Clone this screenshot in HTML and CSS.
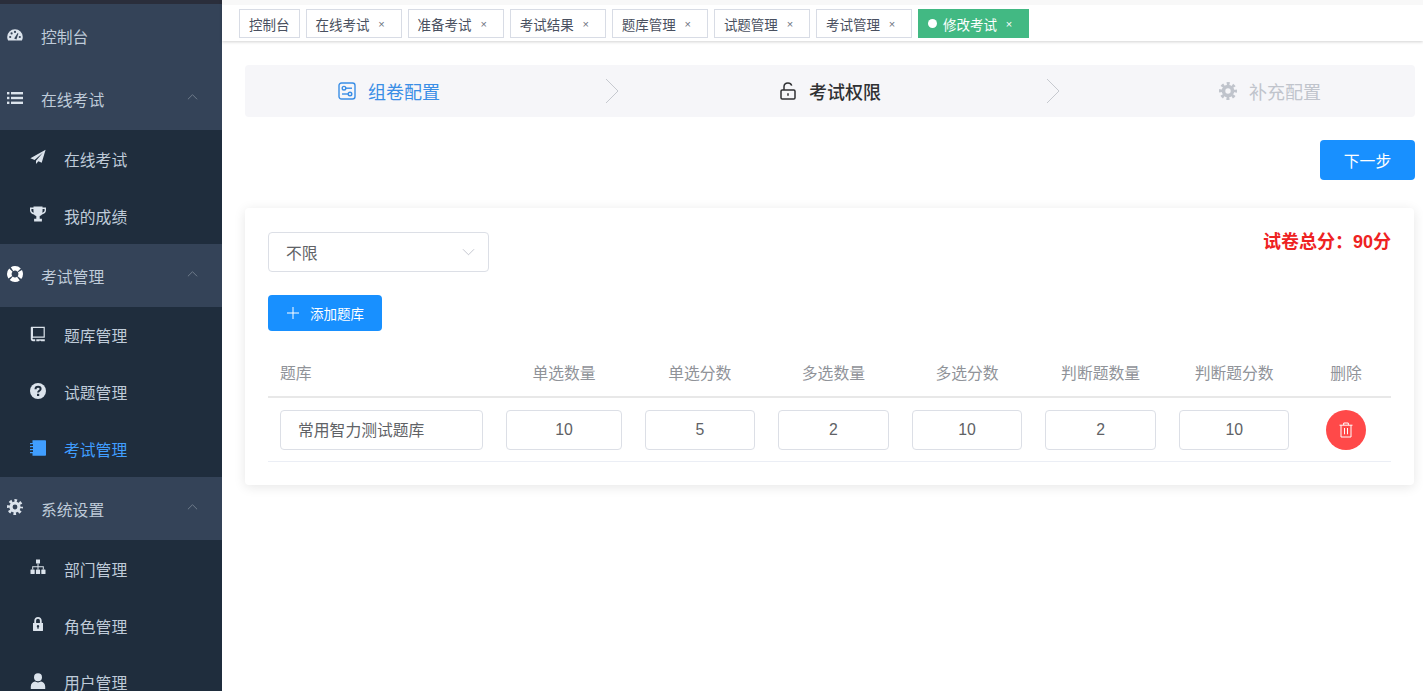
FILE: index.html
```html
<!DOCTYPE html>
<html lang="zh-CN">
<head>
    <meta charset="UTF-8">
    <meta name="viewport" content="width=device-width, initial-scale=1.0">
    <title>修改考试</title>
    <link rel="stylesheet" href="styles.css">
</head>
<body>
<aside class="sidebar">
    <div class="sidebar-top"></div>

    <a class="menu-head">
        <svg class="menu-icon" viewBox="0 0 16 16"><path d="M8 2.2A7.8 7.8 0 0 0 .2 10c0 1.3.3 2.5.9 3.6h13.8c.6-1.1.9-2.3.9-3.6A7.8 7.8 0 0 0 8 2.2z"/><g class="icon-hole"><circle cx="3.2" cy="10" r="1.1"/><circle cx="4.6" cy="6.4" r="1.1"/><circle cx="8" cy="4.9" r="1.1"/><circle cx="12.8" cy="10" r="1.1"/><path d="M7.2 11.6 10.6 6l.8.4-2 6z"/></g></svg>
        <span>控制台</span>
    </a>

    <a class="menu-head">
        <svg class="menu-icon" viewBox="0 0 16 16"><rect x="0" y="2" width="2.4" height="2.4"/><rect x="0" y="6.8" width="2.4" height="2.4"/><rect x="0" y="11.6" width="2.4" height="2.4"/><rect x="4" y="2" width="12" height="2.4"/><rect x="4" y="6.8" width="12" height="2.4"/><rect x="4" y="11.6" width="12" height="2.4"/></svg>
        <span>在线考试</span>
        <svg class="menu-arrow" viewBox="0 0 12 8"><path d="M1 6.5 6 1.5l5 5"/></svg>
    </a>
    <a class="menu-item">
        <svg class="menu-icon" viewBox="0 0 16 16"><path d="M15.6.8.4 9.2l4.2 1.7L13 3.6 6 11.7V15l2.4-2.7 3.3 1.4z"/></svg>
        <span>在线考试</span>
    </a>
    <a class="menu-item">
        <svg class="menu-icon" viewBox="0 0 16 16"><path d="M3.5 .4h9v1.200H16v2.700c0 2-1.500 3.800-4 4.100-.6.900-1.300 1.400-2.300 1.700v2.700h2.200v2.600H4.100v-2.600h2.200v-2.700c-1-.3-1.700-.8-2.300-1.700-2.500-.3-4-2.100-4-3.900V1.600h3.500zM1.400 3v1.300c0 1 .8 2.100 2.300 2.400-.2-.9-.3-2.100-.3-3.700zm13.200 0h-2c0 1.600-.1 2.800-.3 3.700 1.500-.3 2.300-1.400 2.300-2.400z"/></svg>
        <span>我的成绩</span>
    </a>

    <a class="menu-head">
        <svg class="menu-icon" viewBox="0 0 16 16"><circle class="ring" cx="8" cy="8" r="5.7"/></svg>
        <span>考试管理</span>
        <svg class="menu-arrow" viewBox="0 0 12 8"><path d="M1 6.5 6 1.5l5 5"/></svg>
    </a>
    <a class="menu-item">
        <svg class="menu-icon" viewBox="0 0 16 16"><path fill-rule="evenodd" d="M1.800.8h13v10.900h-11c-.9 0-1.300.4-1.300.8s.4.8 1.300.8h1.400v2h-2.200C1.600 15.300.8 14.200.8 13V1.800c0-.6.4-1 1-1zm1.200 1.200v8.500c.3-.1.500-.1.800-.1h9.800V2zM6.300 13.300h8.500v2H11v-.8l-.8.600-.8-.6v.8H6.300z"/></svg>
        <span>题库管理</span>
    </a>
    <a class="menu-item">
        <svg class="menu-icon" viewBox="0 0 16 16"><circle cx="8" cy="8" r="8"/><path class="icon-mark" d="M5.500 6.200c0-1.500 1.100-2.400 2.600-2.400s2.500.9 2.500 2.200c0 1.800-2.500 1.800-2.500 3.600"/><rect class="icon-hole" x="7" y="10.800" width="2.200" height="2.200"/></svg>
        <span>试题管理</span>
    </a>
    <a class="menu-item active">
        <svg class="menu-icon" viewBox="0 0 16 16"><path d="M2.500 .3h12.700c.5 0 .8.300.8.800v13.800c0 .5-.3.800-.8.800H2.500z"/><path d="M0 3h3.500v1.300H0zM0 6h3.500v1.300H0zM0 9h3.500v1.300H0zM0 12h3.500v1.300H0z"/><path class="icon-hole" d="M1.500 4.300H3V6H1.500zM1.500 7.300H3V9H1.500zM1.500 10.300H3V12H1.500z"/></svg>
        <span>考试管理</span>
    </a>

    <a class="menu-head">
        <svg class="menu-icon" viewBox="0 0 16 16"><circle class="cog-teeth" cx="8" cy="8" r="6.500"/><circle class="cog-body" cx="8" cy="8" r="4"/></svg>
        <span>系统设置</span>
        <svg class="menu-arrow" viewBox="0 0 12 8"><path d="M1 6.5 6 1.5l5 5"/></svg>
    </a>
    <a class="menu-item">
        <svg class="menu-icon" viewBox="0 0 16 16"><rect x="6" y="0.500" width="4" height="4"/><rect x="0.500" y="10.500" width="4.200" height="4.500" rx=".6"/><rect x="5.900" y="10.500" width="4.200" height="4.500" rx=".6"/><rect x="11.300" y="10.500" width="4.200" height="4.500" rx=".6"/><path d="M7.500 4.500h1v2.800h5.300v3.200h-1V8.300H8.500v2.200h-1V8.300H3.200v2.200h-1V7.300h5.300z"/></svg>
        <span>部门管理</span>
    </a>
    <a class="menu-item">
        <svg class="menu-icon" viewBox="0 0 16 16"><path fill-rule="evenodd" d="M8 1C5.800 1 4.300 2.500 4.300 4.700V7H3v7.600c0 .2.200.4.400.4h9.200c.2 0 .4-.2.400-.4V7h-1.300V4.700C11.700 2.500 10.200 1 8 1zm0 1.800c1.200 0 1.900.8 1.900 2V7H6.100V4.800c0-1.200.7-2 1.900-2zM8 9a1.300 1.300 0 0 0-.6 2.400v1.400h1.200v-1.400A1.300 1.300 0 0 0 8 9z"/></svg>
        <span>角色管理</span>
    </a>
    <a class="menu-item">
        <svg class="menu-icon" viewBox="0 0 16 16"><circle cx="8" cy="4.300" r="4"/><path d="M.8 16v-2.500C.8 10.500 3 8.800 5 8.600c.8.500 1.800.8 3 .8s2.200-.3 3-.8c2 .2 4.200 1.900 4.200 4.900V16z"/></svg>
        <span>用户管理</span>
    </a>
</aside>

<div class="main">
    <nav class="tags">
        <a class="tag">控制台</a>
        <a class="tag">在线考试<i class="tag-close">×</i></a>
        <a class="tag">准备考试<i class="tag-close">×</i></a>
        <a class="tag">考试结果<i class="tag-close">×</i></a>
        <a class="tag">题库管理<i class="tag-close">×</i></a>
        <a class="tag">试题管理<i class="tag-close">×</i></a>
        <a class="tag">考试管理<i class="tag-close">×</i></a>
        <a class="tag tag-active"><b class="tag-dot"></b>修改考试<i class="tag-close">×</i></a>
    </nav>

    <div class="content">
        <div class="steps">
            <div class="step step-done">
                <svg class="step-icon" viewBox="0 0 18 18"><rect x="1" y="1" width="16" height="16" rx="2.500"/><circle cx="6" cy="6.200" r="1.800"/><path d="M7.800 6.200H14"/><circle cx="12" cy="12" r="1.800"/><path d="M4 12h6.200"/></svg>
                <span>组卷配置</span>
                <svg class="step-arrow" viewBox="0 0 14 26"><path d="M1 1l12 12L1 25"/></svg>
            </div>
            <div class="step step-current">
                <svg class="step-icon" viewBox="0 0 18 18"><rect x="2" y="8" width="14" height="9" rx="1.200"/><path d="M5 8V4.800C5 2.600 6.700 1 9 1c1.800 0 3.200 1 3.700 2.600"/><path d="M9 11.200v2.600"/></svg>
                <span>考试权限</span>
                <svg class="step-arrow" viewBox="0 0 14 26"><path d="M1 1l12 12L1 25"/></svg>
            </div>
            <div class="step step-todo">
                <svg class="step-icon step-cog" viewBox="0 0 16 16"><circle class="cog-teeth" cx="8" cy="8" r="6.500"/><circle class="cog-body" cx="8" cy="8" r="4"/></svg>
                <span>补充配置</span>
            </div>
        </div>

        <div class="next-row">
            <button class="btn btn-next">下一步</button>
        </div>

        <section class="card">
            <div class="card-top">
                <div class="select">
                    <span>不限</span>
                    <svg class="select-arrow" viewBox="0 0 14 8"><path d="M1 1l6 6 6-6"/></svg>
                </div>
                <div class="total">试卷总分：90分</div>
            </div>

            <button class="btn btn-add">
                <svg class="add-icon" viewBox="0 0 12 12"><path d="M6 0v12M0 6h12"/></svg>
                添加题库
            </button>

            <table class="bank-table">
                <colgroup>
                    <col class="col-name">
                    <col class="col-first">
                    <col class="col-num"><col class="col-num"><col class="col-num"><col class="col-num"><col class="col-num">
                    <col class="col-del">
                </colgroup>
                <thead>
                <tr>
                    <th class="th-name">题库</th>
                    <th>单选数量</th>
                    <th>单选分数</th>
                    <th>多选数量</th>
                    <th>多选分数</th>
                    <th>判断题数量</th>
                    <th>判断题分数</th>
                    <th>删除</th>
                </tr>
                </thead>
                <tbody>
                <tr>
                    <td class="td-name"><input class="field field-name" value="常用智力测试题库" readonly></td>
                    <td class="td-first"><input class="field" value="10" readonly></td>
                    <td><input class="field" value="5" readonly></td>
                    <td><input class="field" value="2" readonly></td>
                    <td><input class="field" value="10" readonly></td>
                    <td><input class="field" value="2" readonly></td>
                    <td><input class="field" value="10" readonly></td>
                    <td>
                        <button class="btn-del">
                            <svg viewBox="0 0 14 16"><path d="M.5 3.200h13M4.700 3V1h4.600v2M2 3.200V15h10V3.200M5.500 6v6.300M8.500 6v6.300"/></svg>
                        </button>
                    </td>
                </tr>
                </tbody>
            </table>
        </section>
    </div>
</div>
</body>
</html>
```

FILE: styles.css
```css
html, body {
    margin: 0;
    padding: 0;
    height: 100%;
    overflow: hidden;
}

body {
    display: flex;
    background: #fff;
    font-family: "Liberation Sans", "Noto Sans CJK SC", sans-serif;
    color: #606266;
}

/* sidebar */
.sidebar {
    flex: 0 0 222px;
    height: 100vh;
    overflow: hidden;
    background: #1f2d3d;
}

.sidebar-top {
    height: 4px;
    background: #2a2e3b;
}

.menu-head, .menu-item {
    display: flex;
    align-items: center;
    gap: 18px;
    font-size: 15.8px;
    color: #bfcbd9;
}

.menu-head {
    height: 63px;
    padding-left: 7px;
    background: #344358;
}

.menu-item {
    height: 56.8px;
    padding-left: 30px;
}

.menu-head span, .menu-item span {
    position: relative;
    top: 1px;
}

.menu-item.active {
    color: #409eff;
}

.menu-icon {
    flex: 0 0 16px;
    width: 16px;
    height: 16px;
    fill: #dbe3ec;
    position: relative;
    top: -1px;
}

.active .menu-icon {
    fill: #409eff;
}

.icon-hole {
    fill: #344358;
}

.menu-item .icon-hole {
    fill: #1f2d3d;
}

.icon-mark {
    fill: none;
    stroke: #1f2d3d;
    stroke-width: 2;
}

.ring {
    fill: none;
    stroke: #fff;
    stroke-width: 4.6;
    stroke-dasharray: 7.6 1.35;
    stroke-dashoffset: 3.8;
}

.cog-teeth {
    fill: none;
    stroke: #dbe3ec;
    stroke-width: 3;
    stroke-dasharray: 2.6 2.5;
    stroke-dashoffset: 1.3;
}

.cog-body {
    fill: none;
    stroke: #dbe3ec;
    stroke-width: 3.2;
}

.menu-arrow {
    width: 11px;
    height: 8px;
    margin-left: auto;
    margin-right: 24px;
    margin-top: -3px;
    fill: none;
    stroke: #74818f;
    stroke-width: 1;
}

/* tags bar */
.main {
    flex: 1;
    min-width: 0;
}

.tags {
    display: flex;
    gap: 6px;
    height: 32px;
    padding: 9px 0 0 17px;
    background: linear-gradient(#f8f8f8 0, #f8f8f8 5px, #fff 5px);
    box-shadow: 0 1px 3px rgba(0, 0, 0, .18);
}

.tag {
    display: flex;
    align-items: center;
    box-sizing: border-box;
    height: 29px;
    padding: 0 9px;
    border: 1px solid #d8dce5;
    background: #fff;
    font-size: 13.5px;
    color: #495060;
}

.tag-close {
    width: 16px;
    margin: 0 2.1px 0 4px;
    font-style: normal;
    font-size: 11px;
    text-align: center;
    color: #6d7380;
}

.tag-active {
    background: #42b983;
    border-color: #42b983;
    color: #fff;
}

.tag-active .tag-close {
    color: #fff;
}

.tag-dot {
    width: 9px;
    height: 9px;
    margin: 0 6px 0 0;
    border-radius: 50%;
    background: #fff;
}

/* steps */
.content {
    padding: 24px 8px 0 23px;
}

.steps {
    display: grid;
    grid-template-columns: 374px 441px 1fr;
    height: 52px;
    background: #f6f6f9;
    border-radius: 4px;
    font-size: 18px;
}

.step {
    display: flex;
    align-items: center;
    gap: 12px;
}

.step:nth-child(1) {
    padding-left: 93px;
}

.step:nth-child(2) {
    padding-left: 160px;
}

.step:nth-child(3) {
    padding-left: 159px;
}

.step-icon {
    flex: 0 0 18px;
    width: 18px;
    height: 18px;
    fill: none;
    stroke: currentColor;
    stroke-width: 1.4;
}

.step-arrow {
    width: 14px;
    height: 26px;
    margin-left: auto;
    fill: none;
    stroke: #c6c9cf;
    stroke-width: 1;
}

.step-done {
    color: #3a8ee6;
}

.step-current {
    color: #303133;
    font-weight: 500;
}

.step-current .step-icon {
    stroke-width: 1.5;
}

.step-todo {
    color: #c0c4cc;
}

.step-cog .cog-teeth, .step-cog .cog-body {
    stroke: #c0c4cc;
}

/* buttons */
.next-row {
    display: flex;
    justify-content: flex-end;
    margin-top: 23px;
}

.btn {
    border: none;
    border-radius: 4px;
    background: #1890ff;
    color: #fff;
    font-family: inherit;
    font-weight: 400;
}

.btn-next {
    width: 95px;
    height: 40px;
    font-size: 15.8px;
}

.btn-add {
    display: flex;
    align-items: center;
    gap: 11px;
    width: 114px;
    height: 36px;
    margin-top: 23px;
    padding: 0 0 0 19px;
    font-size: 13.5px;
}

.add-icon {
    width: 12px;
    height: 12px;
    fill: none;
    stroke: #fff;
    stroke-width: 1;
}

/* card */
.card {
    box-sizing: border-box;
    width: 1169px;
    height: 277px;
    margin-top: 28px;
    padding: 24px 23px;
    border-radius: 4px;
    background: #fff;
    box-shadow: 0 2px 12px rgba(0, 0, 0, .1);
}

.card-top {
    display: flex;
    justify-content: space-between;
    align-items: flex-start;
}

.select {
    display: flex;
    align-items: center;
    justify-content: space-between;
    box-sizing: border-box;
    width: 221px;
    height: 40px;
    padding: 0 13px 0 17px;
    border: 1px solid #dcdfe6;
    border-radius: 4px;
    font-size: 15.8px;
}

.select-arrow {
    width: 13px;
    height: 8px;
    fill: none;
    stroke: #c0c4cc;
    stroke-width: 1;
}

.total {
    margin-top: -2px;
    font-size: 18px;
    line-height: 24px;
    font-weight: 700;
    color: #ee2222;
}

/* table */
.bank-table {
    width: 1123px;
    margin-top: 18px;
    border-collapse: collapse;
    table-layout: fixed;
}

.col-name {
    width: 227px;
}

.col-first {
    width: 138px;
}

.col-num {
    width: 133.6px;
}

.col-del {
    width: 90px;
}

.bank-table th {
    height: 47px;
    padding: 0;
    border-bottom: 2px solid #e8e8e8;
    font-size: 15.8px;
    font-weight: 400;
    color: #909399;
    text-align: center;
}

.bank-table th.th-name {
    padding-left: 12px;
    text-align: left;
}

.bank-table td {
    height: 63px;
    padding: 0 11.5px;
    border-bottom: 1px solid #ebeef5;
    text-align: center;
}

.bank-table td.td-name {
    padding: 0 12px;
}

.bank-table td.td-first {
    padding: 0 11px;
}

.field {
    box-sizing: border-box;
    width: 100%;
    height: 40px;
    padding: 0 8px;
    border: 1px solid #dcdfe6;
    border-radius: 4px;
    font-family: inherit;
    font-size: 15.8px;
    color: #606266;
    text-align: center;
    outline: none;
    display: block;
}

.field-name {
    padding-left: 17px;
    text-align: left;
}

.btn-del {
    display: inline-flex;
    align-items: center;
    justify-content: center;
    width: 40px;
    height: 40px;
    padding: 0;
    border: none;
    border-radius: 50%;
    background: #ff4949;
    vertical-align: middle;
}

.btn-del svg {
    width: 14px;
    height: 16px;
    fill: none;
    stroke: #fff;
    stroke-width: 1;
}
```
